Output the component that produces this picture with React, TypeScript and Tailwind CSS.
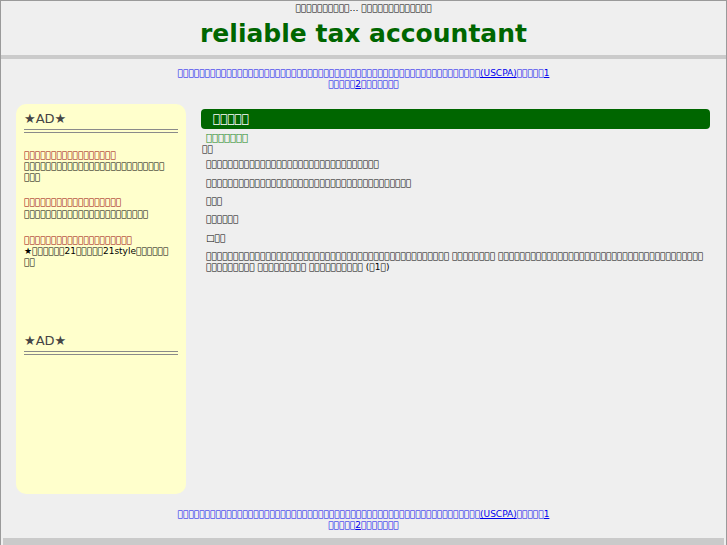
import React from "react";

const T = (n: number) => "\uE000".repeat(n);

export default function App() {
  return (
    <div className="w-[727px] h-[545px] overflow-hidden bg-[#efefef] border-l border-r border-t border-[#9a9a9a] font-['DejaVu_Sans',sans-serif] text-black">
      <div className="text-center text-[9px] leading-[12px] pt-[1px] text-black">
        {T(10)}… {T(13)}
      </div>
      <h1 className="text-center text-[25px] font-bold leading-[32px] text-[#006600] mt-[4px]">
        reliable tax accountant
      </h1>
      <div className="h-[4px] bg-[#cbcbcb] mt-[5px]" />
      <div className="w-[380px] mx-auto text-center text-[9px] leading-[11px] mt-[9px]">
        <a href="#" className="text-[#0000ee] underline">
          {T(56)}(USCPA){T(5)}1 {T(5)}2{T(7)}
        </a>
      </div>
      <div className="flex mt-[14px] pl-[15px] pr-[16px]">
        <aside className="w-[170px] h-[390px] shrink-0 bg-[#ffffcc] rounded-[10px] px-[8px] pt-[7px]">
          <div className="text-[13px] leading-[16px] text-[#444]">★AD★</div>
          <div className="border-b-[4px] border-double border-[#8a8a8a] mt-[2px]" />
          <div className="mt-[17px] text-[9px] leading-[11px]">
            <a href="#" className="text-[#990000] underline decoration-[#cc3333]">{T(17)}</a>
            <div className="text-black">
              {T(26)}
              <br />
              {T(3)}
            </div>
          </div>
          <div className="mt-[14px] text-[9px] leading-[11.5px]">
            <a href="#" className="text-[#990000] underline decoration-[#cc3333]">{T(18)}</a>
            <div className="text-black">{T(23)}</div>
          </div>
          <div className="mt-[15px] text-[9px] leading-[11px]">
            <a href="#" className="text-[#990000] underline decoration-[#cc3333]">{T(20)}</a>
            <div className="text-black">
              ★{T(6)}21{T(5)}21style{T(6)}
              <br />
              {T(2)}
            </div>
          </div>
          <div className="text-[13px] leading-[16px] text-[#444] mt-[65px]">★AD★</div>
          <div className="border-b-[4px] border-double border-[#8a8a8a] mt-[2px]" />
        </aside>
        <main className="flex-1 ml-[15px] pt-[5px]">
          <div className="h-[20px] bg-[#006600] rounded-[4px] text-white text-[12px] leading-[20px] pl-[12px]">
            {T(5)}
          </div>
          <div className="text-[10px] leading-[13px] text-[#228822] mt-[2px] pl-[5px]">{T(7)}</div>
          <div className="text-[9px] leading-[11px] pl-[1px]">{T(2)}</div>
          <div className="pl-[5px] text-[9px] leading-[11px]">
            <p className="mt-[4px]">{T(32)}</p>
            <p className="mt-[8px]">{T(38)}</p>
            <p className="mt-[7px]">{T(3)}</p>
            <p className="mt-[7px]">{T(6)}</p>
            <p className="mt-[8px]">□{T(2)}</p>
            <p className="mt-[7px]">
              {T(45)} {T(8)} {T(38)}
              <br />
              {T(9)} {T(9)} {T(10)} ({T(1)}1{T(1)})
            </p>
          </div>
        </main>
      </div>
      <div className="w-[380px] mx-auto text-center text-[9px] leading-[11px] mt-[15px]">
        <a href="#" className="text-[#0000ee] underline">
          {T(56)}(USCPA){T(5)}1 {T(5)}2{T(7)}
        </a>
      </div>
      <div className="h-[7px] bg-[#cacaca] mt-[7px] mx-[2px]" />
    </div>
  );
}
